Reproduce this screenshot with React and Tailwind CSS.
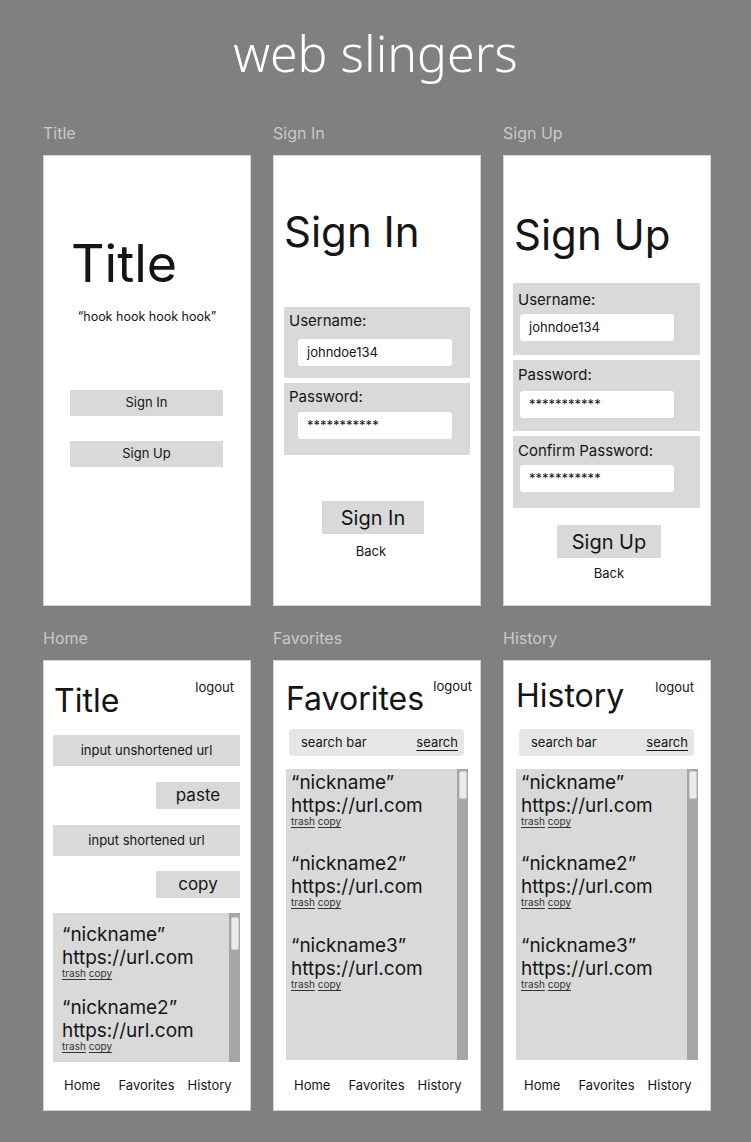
const inter = "font-['Inter','Noto_Sans',sans-serif]";

function Label({ children }) {
  return <div className="h-[33px] pt-[1px] text-[16px] leading-[20px] text-[#c9c9c9]">{children}</div>;
}

function Frame({ children }) {
  return (
    <div className="flex h-[451px] w-[208px] flex-col border border-[#d4d4d4] bg-white text-[#151515]">
      {children}
    </div>
  );
}

function Input({ value, className }) {
  return (
    <div className={`flex h-[27px] w-[154px] items-center rounded-[3px] bg-white pl-[9px] text-[13px] ${className}`}>
      {value}
    </div>
  );
}

function Scrollbar({ thumb }) {
  return (
    <div className="w-[11px] shrink-0 bg-[#a6a6a6]">
      <div className={`ml-[2px] w-[8px] rounded-[2px] border border-[#cfcfcf] bg-[#ececec] ${thumb}`} />
    </div>
  );
}

function LinkItem({ name, gap }) {
  return (
    <div className={gap}>
      <div className="text-[19px] leading-[23px]">“{name}”</div>
      <div className="mt-[3px] text-[19px] leading-[18px]">https://url.com</div>
      <div className="flex gap-[3px] text-[10px] leading-[12px] text-[#333]">
        <span className="underline underline-offset-[2px]">trash</span>
        <span className="underline underline-offset-[2px]">copy</span>
      </div>
    </div>
  );
}

function Nav({ top }) {
  return (
    <div className={`flex text-[13px] leading-[16px] ${top}`}>
      <span className="ml-[20px]">Home</span>
      <span className="ml-[18px]">Favorites</span>
      <span className="ml-[13px]">History</span>
    </div>
  );
}

function SearchBar() {
  return (
    <div className="ml-[15px] flex h-[27px] w-[175px] items-center justify-between rounded-[4px] bg-[#e6e6e6] pl-[12px] pr-[6px] text-[13px]">
      <span>search bar</span>
      <span className="underline underline-offset-[3px]">search</span>
    </div>
  );
}

export default function App() {
  return (
    <div className={`h-[1142px] w-[751px] bg-[#808080] ${inter}`}>
      <div className="h-[122px] pt-[28px] text-center font-['Noto_Sans',sans-serif] text-[50px] font-light leading-[50px] text-white">
        web slingers
      </div>

      <div className="flex gap-[22px] pl-[43px]">
        <div>
          <Label>Title</Label>
          <Frame>
            <div className="ml-[27px] mt-[81px] text-[52px] leading-[54px]">Title</div>
            <div className="mt-[18px] text-center text-[12.5px] leading-[16px]">“hook hook hook hook”</div>
            <div className="ml-[26px] mt-[65px] flex h-[26px] w-[153px] items-center justify-center bg-[#d9d9d9] text-[13px]">
              Sign In
            </div>
            <div className="ml-[26px] mt-[25px] flex h-[26px] w-[153px] items-center justify-center bg-[#d9d9d9] text-[13px]">
              Sign Up
            </div>
          </Frame>
        </div>

        <div>
          <Label>Sign In</Label>
          <Frame>
            <div className="ml-[10px] mt-[52px] text-[42px] leading-[48px]">Sign In</div>
            <div className="ml-[10px] mt-[51px] h-[71px] w-[186px] bg-[#d9d9d9] pt-[4px]">
              <div className="ml-[5px] text-[15px] leading-[20px]">Username:</div>
              <Input value="johndoe134" className="ml-[14px] mt-[8px]" />
            </div>
            <div className="ml-[10px] mt-[5px] h-[72px] w-[186px] bg-[#d9d9d9] pt-[4px]">
              <div className="ml-[5px] text-[15px] leading-[20px]">Password:</div>
              <Input value="***********" className="ml-[14px] mt-[5px]" />
            </div>
            <div className="ml-[48px] mt-[46px] flex h-[33px] w-[102px] items-center justify-center bg-[#d9d9d9] text-[20px]">
              Sign In
            </div>
            <div className="ml-[46px] mt-[9px] w-[102px] text-center text-[13px] leading-[16px]">Back</div>
          </Frame>
        </div>

        <div>
          <Label>Sign Up</Label>
          <Frame>
            <div className="ml-[10px] mt-[57px] text-[42px] leading-[44px]">Sign Up</div>
            <div className="ml-[9px] mt-[26px] h-[72px] w-[187px] bg-[#d9d9d9] pt-[7px]">
              <div className="ml-[5px] text-[15px] leading-[20px]">Username:</div>
              <Input value="johndoe134" className="ml-[7px] mt-[4px]" />
            </div>
            <div className="ml-[9px] mt-[5px] h-[71px] w-[187px] bg-[#d9d9d9] pt-[5px]">
              <div className="ml-[5px] text-[15px] leading-[20px]">Password:</div>
              <Input value="***********" className="ml-[7px] mt-[6px]" />
            </div>
            <div className="ml-[9px] mt-[5px] h-[72px] w-[187px] bg-[#d9d9d9] pt-[5px]">
              <div className="ml-[5px] text-[15px] leading-[20px]">Confirm Password:</div>
              <Input value="***********" className="ml-[7px] mt-[4px]" />
            </div>
            <div className="ml-[53px] mt-[17px] flex h-[33px] w-[104px] items-center justify-center bg-[#d9d9d9] text-[20px]">
              Sign Up
            </div>
            <div className="ml-[53px] mt-[7px] w-[104px] text-center text-[13px] leading-[16px]">Back</div>
          </Frame>
        </div>
      </div>

      <div className="mt-[21px] flex gap-[22px] pl-[43px]">
        <div>
          <Label>Home</Label>
          <Frame>
            <div className="mt-[18px] flex items-start justify-between pr-[16px]">
              <div className="ml-[10px] mt-[4px] text-[32px] leading-[36px]">Title</div>
              <div className="text-[13px] leading-[16px]">logout</div>
            </div>
            <div className="ml-[9px] mt-[16px] flex h-[31px] w-[187px] items-center justify-center bg-[#d9d9d9] text-[13px]">
              input unshortened url
            </div>
            <div className="ml-[112px] mt-[16px] flex h-[27px] w-[84px] items-center justify-center bg-[#d9d9d9] text-[17px]">
              paste
            </div>
            <div className="ml-[9px] mt-[16px] flex h-[31px] w-[187px] items-center justify-center bg-[#d9d9d9] text-[13px]">
              input shortened url
            </div>
            <div className="ml-[112px] mt-[15px] flex h-[27px] w-[84px] items-center justify-center bg-[#d9d9d9] text-[17px]">
              copy
            </div>
            <div className="ml-[9px] mt-[15px] flex h-[149px] w-[187px] bg-[#d9d9d9]">
              <div className="flex-1 overflow-hidden pl-[9px] pt-[10px]">
                <LinkItem name="nickname" />
                <LinkItem name="nickname2" gap="mt-[17px]" />
              </div>
              <Scrollbar thumb="mt-[4px] h-[33px]" />
            </div>
            <Nav top="mt-[15px]" />
          </Frame>
        </div>

        <div>
          <Label>Favorites</Label>
          <Frame>
            <div className="mt-[17px] flex items-start justify-between pr-[8px]">
              <div className="ml-[12px] mt-[3px] text-[32px] leading-[36px]">Favorites</div>
              <div className="text-[13px] leading-[16px]">logout</div>
            </div>
            <div className="mt-[12px]">
              <SearchBar />
            </div>
            <div className="ml-[12px] mt-[13px] flex h-[291px] w-[182px] bg-[#d9d9d9]">
              <div className="flex-1 pl-[5px] pt-[2px]">
                <LinkItem name="nickname" />
                <LinkItem name="nickname2" gap="mt-[25px]" />
                <LinkItem name="nickname3" gap="mt-[26px]" />
              </div>
              <Scrollbar thumb="mt-[2px] h-[28px]" />
            </div>
            <Nav top="mt-[17px]" />
          </Frame>
        </div>

        <div>
          <Label>History</Label>
          <Frame>
            <div className="mt-[17px] flex items-start justify-between pr-[16px]">
              <div className="ml-[12px] text-[32px] leading-[36px]">History</div>
              <div className="mt-[1px] text-[13px] leading-[16px]">logout</div>
            </div>
            <div className="mt-[15px]">
              <SearchBar />
            </div>
            <div className="ml-[12px] mt-[13px] flex h-[291px] w-[182px] bg-[#d9d9d9]">
              <div className="flex-1 pl-[5px] pt-[2px]">
                <LinkItem name="nickname" />
                <LinkItem name="nickname2" gap="mt-[25px]" />
                <LinkItem name="nickname3" gap="mt-[26px]" />
              </div>
              <Scrollbar thumb="mt-[2px] h-[28px]" />
            </div>
            <Nav top="mt-[17px]" />
          </Frame>
        </div>
      </div>
    </div>
  );
}
